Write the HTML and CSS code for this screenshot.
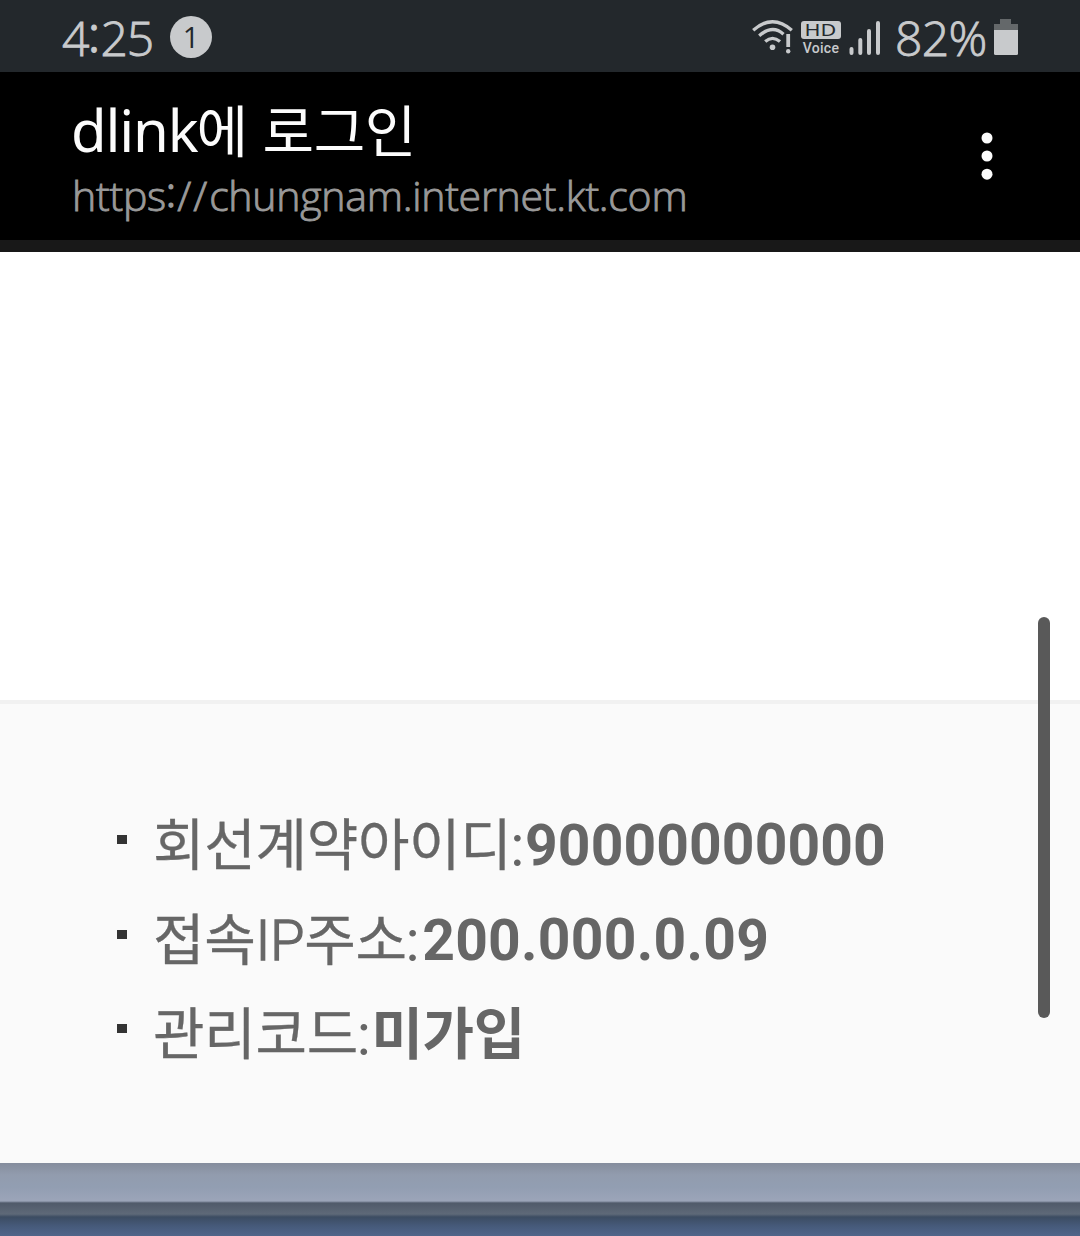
FILE: index.html
```html
<!DOCTYPE html>
<html lang="ko">
<head>
<meta charset="utf-8">
<title>dlink에 로그인</title>
<link rel="stylesheet" href="styles.css">
</head>
<body>
<header class="status">
  <span class="time">4<span class="time-colon">:</span>25</span>
  <span class="count">1</span>
  <div class="indicators">
    <svg class="wifi" width="42" height="36" viewBox="0 0 42 36" fill="none" stroke="#c8cacc">
      <path d="M1.2 11.2Q20.5-5.8 39.8 11.2M7.2 16.8Q20.5 5.2 31.5 15.2M13.2 22.6Q20.5 16.2 28 22.6" stroke-width="3.3"/>
      <circle cx="20.5" cy="28.3" r="2.8" fill="#c8cacc" stroke="none"/>
      <path d="M36.2 15v13" stroke-width="3.8"/>
      <circle cx="36.2" cy="32.2" r="2.2" fill="#c8cacc" stroke="none"/>
    </svg>
    <div class="volte"><span class="hd"><span class="hd-text">HD</span></span><span class="voice">Voice</span></div>
    <svg class="signal" width="32" height="36" viewBox="0 0 32 36" stroke="#c8cacc" stroke-width="4" stroke-linecap="round">
      <path d="M2.5 30v4M11.3 21v13M20 12v22M29 4v30"/>
    </svg>
    <span class="percent">82%</span>
    <svg class="battery" width="24" height="36" viewBox="0 0 24 36">
      <path d="M6 0h11v5h7v6H0V5h6z" fill="#64686a"/>
      <path d="M0 11h24v23.5q0 1.5-1.5 1.5h-21Q0 36 0 34.5z" fill="#c8cacc"/>
    </svg>
  </div>
</header>
<section class="appbar">
  <div class="heading">
    <h1 class="title"><span class="title-name">dlink</span><span class="title-ko">에 로그인</span></h1>
    <p class="url">https<span class="url-colon">:</span><span class="slashes">//</span>chungnam.internet.kt.com</p>
  </div>
  <svg class="more" width="12" height="48" viewBox="0 0 12 48" fill="#fcfcfc">
    <circle cx="6" cy="6" r="5.5"/><circle cx="6" cy="24" r="5.5"/><circle cx="6" cy="42.2" r="5.5"/>
  </svg>
</section>
<main class="page">
  <div class="blank"></div>
  <ul class="info">
    <li class="row"><span class="label">회선계약아이디</span><span class="colon">:</span><b class="value">90000<span class="up">000</span>000</b></li>
    <li class="row"><span class="label">접속<span class="latin">IP</span>주소</span><span class="colon">:</span><b class="value ip">200.<span class="up">000</span>.<span class="up">0</span>.<span class="up">0</span>9</b></li>
    <li class="row"><span class="label">관리코드</span><span class="colon">:</span><b class="value ko">미가입</b></li>
  </ul>
  <div class="scrollbar"></div>
</main>
<footer class="bottom"></footer>
</body>
</html>
```
FILE: styles.css
```css
* { box-sizing: border-box; }
body {
  margin: 0;
  width: 1080px;
  height: 1236px;
  display: flex;
  flex-direction: column;
  overflow: hidden;
  background: #fff;
  font-family: "Noto Sans", "Noto Sans CJK KR", sans-serif;
  white-space: nowrap;
}
.status {
  height: 72px;
  display: flex;
  align-items: center;
  padding: 2px 62px 0 62px;
  background: #23282c;
  color: #c8cacc;
}
.time, .percent {
  font-family: "Open Sans", sans-serif;
  font-weight: 300;
  font-size: 48px;
  line-height: 72px;
  padding-top: 2px;
  -webkit-text-stroke: 0.9px #c8cacc;
}
.time { width: 108px; letter-spacing: -1.1px; }
.time-colon { position: relative; top: -4px; -webkit-text-stroke-width: 2px; letter-spacing: 0.8px; }
.percent { width: 99px; letter-spacing: -0.6px; }
.count {
  width: 42px;
  height: 42px;
  border-radius: 50%;
  background: #c8cacc;
  color: #23282c;
  font-family: "Open Sans", sans-serif;
  font-size: 29px;
  line-height: 42px;
  text-align: center;
}
.indicators { margin-left: auto; display: flex; align-items: center; }
.volte {
  width: 40px;
  margin: 3px 8px 0 7px;
  display: flex;
  flex-direction: column;
  align-items: center;
}
.hd {
  width: 40px;
  height: 18px;
  border-radius: 3px;
  background: #c8cacc;
  color: #23282c;
  display: flex;
  justify-content: center;
}
.hd-text {
  font-size: 17px;
  line-height: 18px;
  transform: scaleX(1.27);
}
.voice {
  font-family: Roboto, sans-serif;
  font-weight: 500;
  font-size: 14px;
  line-height: 18px;
  letter-spacing: 0.3px;
}
.signal { margin-right: 14px; }
.appbar {
  height: 180px;
  display: flex;
  justify-content: space-between;
  padding: 0 87px 0 71px;
  background: #000;
  border-bottom: 12px solid #181818;
}
.heading { padding-top: 20px; }
.title {
  margin: 0;
  height: 75px;
  display: flex;
  align-items: baseline;
  color: #fcfcfc;
  font-size: 58px;
  font-weight: 400;
  line-height: 72px;
}
.title-name { letter-spacing: -1.2px; }
.title-ko {
  font-family: "Noto Sans CJK KR", sans-serif;
  font-size: 56px;
  letter-spacing: -0.5px;
  margin-left: -1px;
  white-space: pre;
}
.url {
  margin: 0;
  padding-left: 1px;
  font-family: "Open Sans", "Noto Sans", sans-serif;
  font-size: 41px;
  font-weight: 300;
  line-height: 56px;
  letter-spacing: -0.25px;
  color: #999;
  -webkit-text-stroke: 0.9px #999;
}
.url-colon { position: relative; top: -4px; -webkit-text-stroke-width: 1.8px; letter-spacing: 1.5px; }
.slashes { letter-spacing: 2px; }
.more { margin-top: 60px; }
.page {
  position: relative;
  height: 911px;
  background: #fafafa;
}
.blank {
  height: 452px;
  background: #fff;
  border-bottom: 4px solid #f1f1f1;
}
.info {
  margin: 0;
  padding: 90px 0 0 117px;
  list-style: none;
  color: #666;
  font-family: "Noto Sans CJK KR", sans-serif;
  font-size: 56px;
}
.row {
  display: flex;
  align-items: baseline;
  height: 94.5px;
  line-height: 94px;
}
.row::before {
  content: "";
  align-self: flex-start;
  flex: none;
  width: 10px;
  height: 9px;
  margin: 41px 26px 0 0;
  background: #333;
}
.label { -webkit-text-stroke: 0.3px #666; letter-spacing: -0.3px; }
.colon {
  width: 13.5px;
  font-family: Roboto, sans-serif;
  font-weight: 300;
  -webkit-text-stroke: 2px #666;
}
.latin { font-family: Roboto, sans-serif; font-weight: 300; -webkit-text-stroke: 1.3px #666; }
.value { font-family: Roboto, sans-serif; font-size: 57px; font-weight: 700; letter-spacing: 0.1px; }
.value.ip { margin-left: 2px; letter-spacing: 0.25px; }
.value.ko { font-family: "Noto Sans CJK KR", sans-serif; font-size: 56px; letter-spacing: -0.3px; }
.up { position: relative; top: -1px; }
.scrollbar {
  position: absolute;
  left: 1038px;
  top: 365px;
  width: 12px;
  height: 401px;
  border-radius: 6px;
  background: #595959;
}
.bottom {
  flex: 1;
  background: linear-gradient(#858d9d 0, #929cae 12px, #929eb2 24px, #9ba4b8 37px, #9ba4b8 38px, #505a6a 40px, #5e6978 51px, #3c4c62 54px, #465a7a 63px, #50658a 73px);
}
```
